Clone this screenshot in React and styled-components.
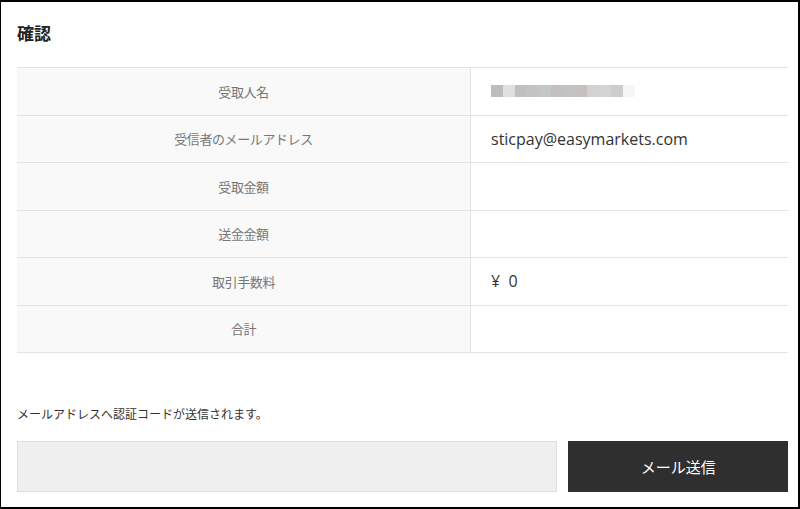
import React from 'react'
import styled, { createGlobalStyle } from 'styled-components'

const GlobalStyle = createGlobalStyle`
  html, body {
    margin: 0;
    padding: 0;
    background: #ffffff;
  }
  body {
    font-family: "Noto Sans CJK JP", "Noto Sans", sans-serif;
  }
`

const Frame = styled.div`
  box-sizing: border-box;
  width: 800px;
  height: 509px;
  border: 1px solid #000;
  border-top-width: 2px;
  border-right-width: 2px;
  border-bottom-width: 2px;
  padding: 0 10px 0 16px;
  display: flex;
  flex-direction: column;
`

const Title = styled.h2`
  margin: 17px 0 0;
  height: 48px;
  font-size: 17px;
  font-weight: 700;
  color: #222;
  line-height: 28px;
`

const Table = styled.div`
  border-top: 1px solid #e3e3e3;
  display: grid;
  grid-template-columns: 454px 1fr;
`

const Label = styled.div`
  height: 46.5px;
  border-bottom: 1px solid #e3e3e3;
  border-right: 1px solid #e3e3e3;
  background: #f9f9f9;
  display: flex;
  align-items: center;
  justify-content: center;
  font-size: 13px;
  letter-spacing: -0.4px;
  color: #777;
`

const Value = styled.div`
  height: 46.5px;
  border-bottom: 1px solid #e3e3e3;
  display: flex;
  align-items: center;
  padding-left: 20px;
  font-family: "Open Sans", "Noto Sans CJK JP", sans-serif;
  font-size: 16px;
  color: #333;
  white-space: pre;
`

const Mosaic = styled.div`
  display: flex;
  height: 12px;
`

const Pixel = styled.span`
  width: 12px;
  height: 12px;
  background: ${p => p.$c};
`

const Note = styled.p`
  margin: 51px 0 0;
  font-size: 12px;
  color: #333;
  line-height: 20px;
`

const Form = styled.div`
  margin-top: 17px;
  display: flex;
  gap: 11px;
`

const CodeInput = styled.input`
  box-sizing: border-box;
  width: 541px;
  height: 51px;
  border: 1px solid #dedede;
  background: #efefef;
  outline: none;
`

const SendButton = styled.button`
  width: 220px;
  height: 51px;
  border: none;
  background: #2f2f2f;
  color: #fff;
  font-family: "Noto Sans CJK JP", sans-serif;
  font-size: 15px;
  cursor: pointer;
`

const mosaic = [
  '#bdbdbd', '#e0e0e0', '#c2bfbf', '#c4c4c4', '#c5c6c8', '#c4c0c1',
  '#c3c3c5', '#c8bfbf', '#d2d2d2', '#d6d3d4', '#cdcdcd', '#f5f6f8',
]

const rows = [
  { label: '受取人名', value: 'mosaic' },
  { label: '受信者のメールアドレス', value: 'sticpay@easymarkets.com' },
  { label: '受取金額', value: '' },
  { label: '送金金額', value: '' },
  { label: '取引手数料', value: '¥  0' },
  { label: '合計', value: '' },
]

const App = () => {
  return (
    <>
      <GlobalStyle />
      <Frame>
        <Title>確認</Title>
        <Table>
          {rows.map(r => (
            <React.Fragment key={r.label}>
              <Label>{r.label}</Label>
              <Value>
                {r.value === 'mosaic' ? (
                  <Mosaic>
                    {mosaic.map((c, i) => <Pixel key={i} $c={c} />)}
                  </Mosaic>
                ) : r.value}
              </Value>
            </React.Fragment>
          ))}
        </Table>
        <Note>メールアドレスへ認証コードが送信されます。</Note>
        <Form>
          <CodeInput />
          <SendButton>メール送信</SendButton>
        </Form>
      </Frame>
    </>
  )
}

export default App
